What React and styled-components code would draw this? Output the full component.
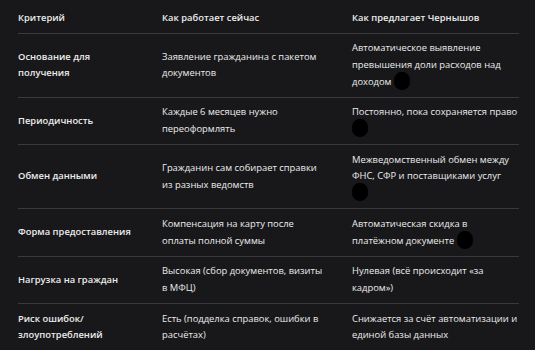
import React from "react";
import styled, { createGlobalStyle } from "styled-components";

const GlobalStyle = createGlobalStyle`
  html, body {
    margin: 0;
    padding: 0;
    background: #18181b;
  }
  body {
    font-family: "Open Sans", "Noto Sans", sans-serif;
    color: #ececec;
  }
`;

const rows = [
  {
    title: "Основание для получения",
    now: "Заявление гражданина с пакетом документов",
    proposal: "Автоматическое выявление превышения доли расходов над доходом",
    blob: "inline",
  },
  {
    title: "Периодичность",
    now: "Каждые 6 месяцев нужно переоформлять",
    proposal: "Постоянно, пока сохраняется право",
    blob: "block",
  },
  {
    title: "Обмен данными",
    now: "Гражданин сам собирает справки из разных ведомств",
    proposal: "Межведомственный обмен между ФНС, СФР и поставщиками услуг",
    blob: "block",
  },
  {
    title: "Форма предоставления",
    now: "Компенсация на карту после оплаты полной суммы",
    proposal: "Автоматическая скидка в платёжном документе",
    blob: "inline",
  },
  {
    title: "Нагрузка на граждан",
    now: "Высокая (сбор документов, визиты в МФЦ)",
    proposal: "Нулевая (всё происходит «за кадром»)",
  },
  {
    title: "Риск ошибок/ злоупотреблений",
    now: "Есть (подделка справок, ошибки в расчётах)",
    proposal: "Снижается за счёт автоматизации и единой базы данных",
  },
];

function App() {
  return (
    <>
      <GlobalStyle />
      <Page>
        <Table>
          <colgroup>
            <col style={{ width: 144 }} />
            <col style={{ width: 190 }} />
            <col style={{ width: 167 }} />
          </colgroup>
          <thead>
            <tr>
              <HeadCell>Критерий</HeadCell>
              <HeadCell>Как работает сейчас</HeadCell>
              <HeadCell>Как предлагает Чернышов</HeadCell>
            </tr>
          </thead>
          <tbody>
            {rows.map((r) => (
              <Row key={r.title}>
                <Cell $strong $pad={20}>{r.title}</Cell>
                <Cell $pad={24}>{r.now}</Cell>
                <Cell $pad={0}>
                  {r.proposal}
                  {r.blob === "inline" && <Blob />}
                  {r.blob === "block" && (
                    <>
                      <br />
                      <Blob $flush />
                    </>
                  )}
                </Cell>
              </Row>
            ))}
          </tbody>
        </Table>
      </Page>
    </>
  );
}

const Page = styled.div`
  padding: 3px 16px 0 18px;
`;

const Table = styled.table`
  width: 501px;
  border-collapse: collapse;
  table-layout: fixed;
  font-size: 9.4px;
  line-height: 16.7px;
`;

const HeadCell = styled.th`
  text-align: left;
  font-weight: 600;
  padding: 6.5px 8px 6.5px 0;
  border-bottom: 1px solid #3a3a3e;
  vertical-align: middle;
  white-space: nowrap;
`;

const Row = styled.tr`
  border-bottom: 1px solid #3a3a3e;
`;

const Cell = styled.td`
  padding: 6.5px ${(p) => p.$pad}px 6.5px 0;
  font-weight: ${(p) => (p.$strong ? 600 : 400)};
  vertical-align: middle;
`;

const Blob = styled.span`
  display: inline-block;
  width: 16px;
  height: 16px;
  margin-left: ${(p) => (p.$flush ? "0" : "3px")};
  border-radius: 45%;
  background: #000;
  vertical-align: top;
  transform: translateY(-1px) scaleY(1.12);
`;

export default App;
